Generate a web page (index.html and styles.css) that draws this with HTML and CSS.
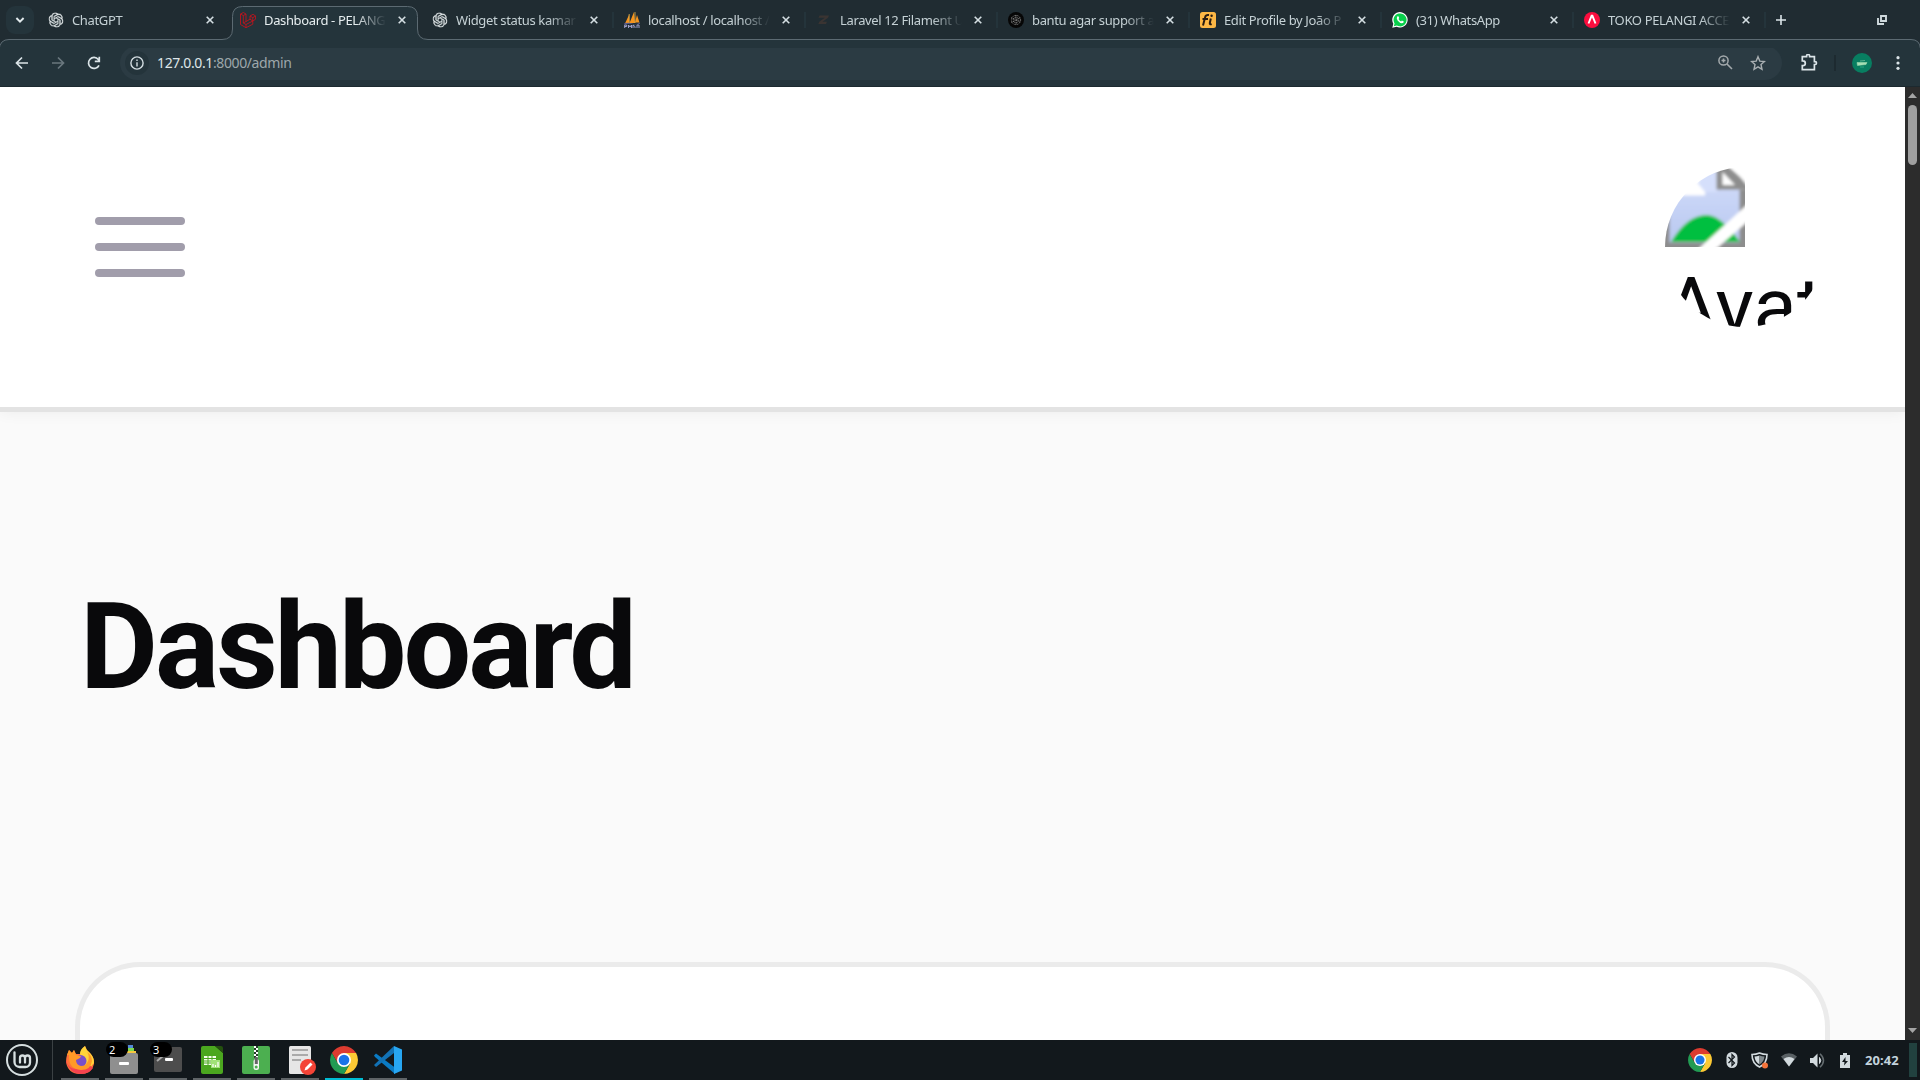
FILE: index.html
```html
<!DOCTYPE html>
<html lang="id">
<head>
<meta charset="utf-8">
<title>Dashboard</title>
<link rel="stylesheet" href="styles.css">
</head>
<body>
<svg class="defs" width="0" height="0">
  <defs>
    <symbol id="close" viewBox="0 0 8 8"><path d="M.7.7l6.6 6.6M7.3.7L.7 7.3" fill="none" stroke="#d5dfe3" stroke-width="1.6"/></symbol>
    <symbol id="gpt" viewBox="0 0 24 24"><path fill="#dde3e5" stroke="#dde3e5" stroke-width=".5" d="M22.280 9.820a5.980 5.980 0 0 0-.520-4.910 6.050 6.050 0 0 0-6.510-2.900A6.070 6.070 0 0 0 4.980 4.180a5.980 5.980 0 0 0-4 2.900 6.050 6.050 0 0 0 .740 7.100 5.980 5.980 0 0 0 .510 4.910 6.050 6.050 0 0 0 6.520 2.900A5.980 5.980 0 0 0 13.260 24a6.060 6.060 0 0 0 5.770-4.210 5.990 5.990 0 0 0 4-2.900 6.060 6.060 0 0 0-.750-7.070zM13.260 22.430a4.480 4.480 0 0 1-2.880-1.040l.140-.080 4.780-2.760a.800.800 0 0 0 .390-.680v-6.740l2.020 1.170v5.620a4.500 4.500 0 0 1-4.450 4.510zM3.600 18.300a4.470 4.470 0 0 1-.540-3.010l.140.090 4.780 2.760a.770.770 0 0 0 .780 0l5.840-3.370v2.330L9.740 19.950A4.500 4.500 0 0 1 3.600 18.300zM2.340 7.900a4.490 4.490 0 0 1 2.370-1.970v5.680a.770.770 0 0 0 .390.680l5.810 3.350-2.020 1.170-4.830-2.790A4.500 4.500 0 0 1 2.340 7.900zm16.600 3.850l-5.840-3.390L15.120 7.200l4.830 2.790a4.490 4.490 0 0 1-.680 8.100v-5.680a.790.790 0 0 0-.330-.660zm2.010-3.020l-.140-.090-4.770-2.780a.780.780 0 0 0-.790 0L9.410 9.230V6.900l4.860-2.820a4.500 4.500 0 0 1 6.680 4.650zM8.310 12.860l-2.020-1.160V6.070a4.500 4.500 0 0 1 7.380-3.450l-.140.080-4.780 2.760a.800.800 0 0 0-.390.680zm1.090-2.360L12 9l2.610 1.500v3L12 15l-2.610-1.500z"/></symbol>
    <symbol id="chrome" viewBox="0 0 28 28">
      <path d="M14 7H26.1A14 14 0 0 1 14 28L20.1 17.5z" fill="#fcc934"/>
      <path d="M1.900 7L8 17.500 14 21V7H26.100A14 14 0 0 0 1.900 7z" fill="#dc3b30"/>
      <path d="M1.900 7L8 17.500l6 3.500 6-3.500L14 28A14 14 0 0 1 1.900 7z" fill="#229b53"/>
      <circle cx="14" cy="14" r="7" fill="#fff"/><circle cx="14" cy="14" r="5.3" fill="#1a73e8"/></symbol>
  </defs>
</svg>

<div class="strip">
  <svg class="outline" width="1920" height="48" viewBox="0 0 1920 48"><path d="M-1 60V49.5Q0 39.5 9 39.5H222Q232.5 39.5 232.5 29V16.500Q232.5 6.5 242.500 6.5H407.500Q417.500 6.5 417.500 16.500V29Q417.500 39.500 428 39.500H1911Q1920 39.500 1920.500 49V60z" fill="#24343b" stroke="#5c6a72"/></svg>
  <button class="search-tabs"><svg width="10" height="8" viewBox="0 0 10 8"><path d="M1.400 2L5 5.600 8.600 2" fill="none" stroke="#e3ebee" stroke-width="1.900"/></svg></button>
  <div class="tabs">
    <div class="tab"><svg class="fav" viewBox="-1 -1 26 26"><use href="#gpt" width="24" height="24"/></svg><span class="title">ChatGPT</span><svg class="x"><use href="#close"/></svg></div>
    <div class="tab active"><svg class="fav" viewBox="0 0 16 16" fill="none" stroke="#d0101a" stroke-width=".8"><path d="M.5 2L3.300.5 6 2v7.500l4-2.300V4L13 2.300 15.600 4v3.200L12.800 9v3.200L6 15.700.500 12.500zM.5 2l2.800 1.600L6 2M3.300 3.600V11L6 12.500l6.800-3.500M6 12.500v3.200M3.300 11L6 9.500M10 4l2.800 1.700L15.600 4M12.800 5.700V9L10 7.200"/></svg><span class="title">Dashboard - PELANGI</span><svg class="x"><use href="#close"/></svg></div>
    <div class="tab"><svg class="fav" viewBox="-1 -1 26 26"><use href="#gpt" width="24" height="24"/></svg><span class="title">Widget status kamar</span><svg class="x"><use href="#close"/></svg></div>
    <div class="tab sep"><svg class="fav" viewBox="0 0 16 16"><path d="M1 11.500L5.200 2.500V11zM5.500 11L10 0l1 11zM11 10.500L13 3l2.500 7.500z" fill="#f6941d"/><path d="M5.200 2v9M11 0v11" stroke="#e3b34c" stroke-width=".8"/><path d="M0 11.500q4-1.500 8 0t8-1v1.200q-4 1-8 .3t-8 .5z" fill="#5a5d95"/><path d="M.7 16v-3h2v1.500h-2M4.500 16v-3l1.500 2 1.500-2v3M9 16v-3l2 1.500V16M13 16v-3h2v3" fill="none" stroke="#aaa9d6" stroke-width=".9"/></svg><span class="title">localhost / localhost /</span><svg class="x"><use href="#close"/></svg></div>
    <div class="tab sep"><svg class="fav" viewBox="0 0 16 16"><path d="M3.500 3.500h9.500l-1 2.300-5.500 4H11l-1 2.200H2.300l1-2.300 5.400-4H2.500z" fill="#3a3432"/></svg><span class="title">Laravel 12 Filament U</span><svg class="x"><use href="#close"/></svg></div>
    <div class="tab sep"><svg class="fav" viewBox="0 0 16 16"><circle cx="8" cy="8" r="8" fill="#060606"/><g fill="none" stroke="#a5a5a5" stroke-width=".8" stroke-dasharray=".9 .8"><circle cx="8" cy="8" r="4.600"/><circle cx="8" cy="8" r="2.800"/><path d="M8 3v10M3.500 5.500l9 5M3.500 10.500l9-5"/></g></svg><span class="title">bantu agar support a</span><svg class="x"><use href="#close"/></svg></div>
    <div class="tab sep"><svg class="fav" viewBox="0 0 16 16"><rect width="16" height="16" rx="2.500" fill="#fdb745"/><path d="M3 13.500L5.200 5Q5.800 2.500 9 3M2.500 7H8M10.800 6.500L9.800 11q-.3 2 1.800 1" fill="none" stroke="#2a1c12" stroke-width="2"/><circle cx="11.600" cy="3.800" r="1.200" fill="#2a1c12"/></svg><span class="title">Edit Profile by João P</span><svg class="x"><use href="#close"/></svg></div>
    <div class="tab sep"><svg class="fav" viewBox="0 0 16 16"><path d="M.3 15.700l1-4A7.700 7.700 0 1 1 4.500 14.700z" fill="#fff"/><path d="M1.800 14.300l.8-2.900a6.500 6.500 0 1 1 2.200 2.100z" fill="#08cf4b"/><path d="M5.400 4.300l1-.1.800 1.900-.7.900q.9 1.700 2.600 2.400l.8-.9 1.900.9q0 1.700-1.800 1.900Q7.800 11.200 5.600 8.500 4 6 5.400 4.300z" fill="#fff"/></svg><span class="title">(31) WhatsApp</span><svg class="x"><use href="#close"/></svg></div>
    <div class="tab sep"><svg class="fav" viewBox="0 0 16 16"><circle cx="8" cy="8" r="8" fill="#fb0d3e"/><path d="M4.500 11.500L7.600 3.800h.8l3.100 7.700" fill="none" stroke="#fff" stroke-width="1.900"/></svg><span class="title">TOKO PELANGI ACCE</span><svg class="x"><use href="#close"/></svg></div>
    <div class="newtab sep"><svg width="10" height="10" viewBox="0 0 10 10"><path d="M5 0v10M0 5h10" stroke="#dbe5e9" stroke-width="1.600"/></svg></div>
  </div>
  <svg class="restore" width="10" height="10" viewBox="0 0 10 10"><path d="M4 1h5v5H4zM1 3v6h6" fill="none" stroke="#cfd9dd" stroke-width="1.900"/></svg>
</div>

<div class="toolbar">
  <svg class="nav-i" viewBox="0 0 14 14"><path d="M13 7H2M7 1.500L1.500 7 7 12.500" fill="none" stroke="#dbe4e8" stroke-width="1.700"/></svg>
  <svg class="nav-i" viewBox="0 0 14 14"><path d="M1 7h11M7 1.500L12.500 7 7 12.500" fill="none" stroke="#6a777e" stroke-width="1.700"/></svg>
  <svg class="nav-i" viewBox="0 0 14 14"><path d="M12 9.300A5.500 5.500 0 1 1 11.300 3.500L12.300 4.700M12.300.8v4.600H7.800" fill="none" stroke="#dbe4e8" stroke-width="1.700"/></svg>
  <div class="omni">
    <span class="info"><svg width="14" height="14" viewBox="0 0 14 14"><circle cx="7" cy="7" r="6.100" fill="none" stroke="#d3dde1" stroke-width="1.400"/><path d="M7 6.200v4.300M7 3.400v1.500" stroke="#d3dde1" stroke-width="1.400"/></svg></span>
    <span class="url">127.0.0.1<i>:8000/admin</i></span>
    <svg class="zoom" width="15" height="15" viewBox="0 0 15 15"><circle cx="5.500" cy="5.500" r="4.600" fill="none" stroke="#a3a9ac" stroke-width="1.500"/><path d="M9 9l5 5M5.500 3.500v4M3.500 5.500h4" stroke="#a3a9ac" stroke-width="1.600"/></svg>
    <svg width="16" height="16" viewBox="0 0 16 16"><path d="M8 1.700l1.800 4.400 4.700.4L11 9.600l1 4.700-4-2.500-4 2.500 1-4.700L1.500 6.500l4.700-.4z" fill="none" stroke="#a9afb2" stroke-width="1.400"/></svg>
  </div>
  <svg class="ext" width="17" height="17" viewBox="0 0 17 17"><path d="M1.300 2.700h4.300V2a1.500 1.500 0 0 1 3 0v.7h4.800v5h.7a1.400 1.400 0 0 1 0 2.800h-.7v5.200H1.300v-4.100h.6a2.400 2.400 0 0 0 0-4.800h-.6z" fill="none" stroke="#dbe4e8" stroke-width="1.700"/></svg>
  <span class="bar"></span>
  <svg class="profile" width="20" height="20" viewBox="0 0 20 20"><circle cx="10" cy="10" r="10" fill="#087e61"/><path d="M5 9.500h10l-1 2-8.500 1zM8 8l5-.500" fill="#a5dfb4" stroke="#a5dfb4" stroke-width=".5"/><path d="M8 14h4" stroke="#2aa584"/></svg>
  <svg class="dots" width="4" height="14" viewBox="0 0 4 14" fill="#dbe4e8"><circle cx="2" cy="1.700" r="1.600"/><circle cx="2" cy="7" r="1.600"/><circle cx="2" cy="12.300" r="1.600"/></svg>
</div>

<div class="view">
  <main class="page">
    <nav class="topbar">
      <div class="burger"><span></span><span></span><span></span></div>
      <div class="avatar">
        <svg width="80" height="80" viewBox="0 0 16 16"><defs><linearGradient id="sky" x2="0" y2="1"><stop offset="0" stop-color="#d5dffb"/><stop offset="1" stop-color="#b9c8f0"/></linearGradient><filter id="soft" x="-20%" y="-20%" width="140%" height="140%"><feGaussianBlur stdDeviation=".35"/></filter></defs>
          <g filter="url(#soft)"><path d="M-1-1h12v5.500h7V18H-1z" fill="#8d8d8d"/><path d="M.9-1h9.600v5.500h4.400v10.600H.9z" fill="url(#sky)"/><path d="M-1-1h8v3.200Q8.500 3.500 8 5.700H3.300L-1 6z" fill="#fff"/><path d="M6.500 3.200Q8 .8 9 0h1.500v5H8z" fill="#d5dffb"/><path d="M1.200 15Q4.500 9.500 8.500 9.600q2.800.2 6.500 5.400z" fill="#05bf40"/><path d="M10.300-1v5.500H18L11.500-1z" fill="#8d8d8d"/><path d="M11.500 1v2.600H14z" fill="#fff"/><path d="M12.500-1h5v5h-.8z" fill="#fff"/><path d="M6 17L17 7v3.500L9.500 17z" fill="#fff"/></g></svg>
        <span>Avatar</span>
      </div>
    </nav>
    <h1>Dashboard</h1>
    <section class="card"></section>
  </main>
  <div class="scroll"><svg width="9" height="5" viewBox="0 0 9 5"><path d="M0 5L4.500 0 9 5z" fill="#a5a5a5"/></svg><span class="thumb"></span><svg width="9" height="5" viewBox="0 0 9 5"><path d="M0 0L4.500 5 9 0z" fill="#a5a5a5"/></svg></div>
</div>

<footer class="panel">
  <div class="menu"><svg width="32" height="32" viewBox="0 0 32 32" fill="none" stroke="#d6dfe0"><circle cx="16" cy="16" r="15" stroke-width="2"/><path d="M8.500 8.500v9.500a5 5 0 0 0 5 5h6a4.500 4.500 0 0 0 4.500-4.500V14a2.500 2.500 0 0 0-5 0v4.500M19 14a2.500 2.500 0 0 0-5 0v4.500" stroke-width="2.300" stroke-linecap="round"/></svg></div>
  <div class="apps">
    <div class="app"><svg width="28" height="28" viewBox="0 0 28 28"><path d="M1 9L3 4l3 3 2-3 2 4h5Q15 3 19 0q1 4 5 7 5 5 4 11-2 10-14 10T0 16q0-4 1-7z" fill="#ff7139"/><path d="M14 8Q14 3 19 0q1 4 5 7 4 4 4 10l-7 8z" fill="#ffd43a"/><circle cx="14.500" cy="15" r="6" fill="#7a4fc9"/><path d="M0 14q2 9 11 9 8 0 11-5l5 4q-4 6-13 6T0 16z" fill="#f5434f"/><path d="M1 9l2-5 3 3 2-3 2 5 5 1-1 2-4 2q0 5 5 6 5 0 7-5 2-5-1-9 5 3 5 9-1 9-11 9-13-1-12-15z" fill="#ff9a27"/></svg></div>
    <div class="app"><svg width="28" height="30" viewBox="0 0 28 30"><path d="M18 0h5v4h-5z" fill="#5289d7"/><path d="M18 3h6v5h-6z" fill="#7bd94e"/><path d="M17 6h9v5h-9z" fill="#f7c83f"/><rect y="8" width="28" height="21" rx="2" fill="#8f8f8f"/><rect x="9" y="17" width="10" height="3" rx="1" fill="#fff"/></svg><b>2</b></div>
    <div class="app"><svg width="28" height="26" viewBox="0 0 28 26"><rect width="28" height="25" rx="2" fill="#4d4d4d"/><path d="M3 14l6-5" stroke="#aaa" stroke-width="2"/><rect x="11" y="11" width="8" height="3" rx="1" fill="#fff"/></svg><b>3</b></div>
    <div class="app"><svg width="22" height="28" viewBox="0 0 22 28"><path d="M2 0h12l8 7v19a2 2 0 0 1-2 2H2a2 2 0 0 1-2-2V2a2 2 0 0 1 2-2z" fill="#4ba71f"/><path d="M14 0h6a2 2 0 0 1 2 2v5z" fill="#24510e"/><path d="M3 10h12v9H3z" fill="#f5ffed"/><path d="M3 12.500h12M3 15h12M3 17h12M7 10v9M11 10v9" stroke="#4ba71f"/><path d="M10 14h9v8h-9z" fill="#a0e278"/><path d="M12 21v-3M14.500 21v-2M17 21v-5" stroke="#fff" stroke-width="1.200"/></svg></div>
    <div class="app"><svg width="28" height="28" viewBox="0 0 28 28"><rect width="28" height="28" rx="2" fill="#4caf50"/><path d="M14 0v12" stroke="#263b29" stroke-width="4"/><path d="M13 0v12" stroke="#fff" stroke-width="2" stroke-dasharray="2 2"/><path d="M15 2v11" stroke="#fff" stroke-width="2" stroke-dasharray="2 2"/><rect x="11.500" y="13" width="5.500" height="11" rx="2.500" fill="#f5f5f5"/><rect x="12.800" y="11" width="3" height="7" fill="#666"/><circle cx="14.200" cy="21" r="1.500" fill="#4caf50"/></svg></div>
    <div class="app editor"><svg width="28" height="29" viewBox="0 0 28 29"><rect x="1" width="22" height="28" rx="1.500" fill="#e6e6e6"/><path d="M4 4h16M4 9h16M4 14h9" stroke="#aaa" stroke-width="2"/><circle cx="20" cy="21" r="8" fill="#f44336"/><path d="M16.500 24.500l1-3 5-5 2 2-5 5z" fill="#fff"/></svg></div>
    <div class="app current"><svg width="28" height="28"><use href="#chrome"/></svg></div>
    <div class="app"><svg width="28" height="28" viewBox="0 0 28 28"><path d="M0 9.500L2 7.500l19 14V28L1 11z" fill="#0a7bc4"/><path d="M0 19L20 0v7L2 21z" fill="#1272b5"/><path d="M20 0l8 3.500v21L20 28z" fill="#27a6f2"/></svg></div>
  </div>
  <div class="tray">
    <svg width="24" height="24"><use href="#chrome"/></svg>
    <svg class="bt" width="12" height="16" viewBox="0 0 12 16"><rect x=".5" width="11" height="16" rx="5.500" fill="#d2dade"/><path d="M2.500 5l6 6L6 13.500v-11L8.500 5l-6 6" fill="none" stroke="#12181c" stroke-width="1.200"/></svg>
    <svg class="shield" width="17" height="17" viewBox="0 0 17 17"><path d="M8.500 1Q5 2.500 1 2.500q0 9 7.500 12.500Q16 11.500 16 2.500 12 2.500 8.500 1z" fill="none" stroke="#d2dade" stroke-width="1.600"/><path d="M8.500 3.500v9Q4 10 3.500 4.500 6 4.500 8.500 3.500z" fill="#d2dade"/><path d="M8.500 3.500v9Q13 10 13.500 4.500 11 4.500 8.500 3.500z" fill="#80898d"/><circle cx="14" cy="13.500" r="3" fill="#f4743b"/></svg>
    <svg class="wifi" width="16" height="14" viewBox="0 0 16 14"><path d="M0 3.500Q8-3 16 3.500L8 13.500z" fill="#596064"/><path d="M2.500 6Q8 2 13.500 6L8 13.500z" fill="#d2dade"/></svg>
    <svg class="vol" width="15" height="15" viewBox="0 0 15 15"><path d="M0 5h3l4.500-4.500v14L3 10H0z" fill="#d2dade"/><path d="M9.500 4.500q2.500 3 0 6z" fill="#d2dade" stroke="#d2dade"/><path d="M10 .8q7 6.700 0 13.400" fill="none" stroke="#646c70" stroke-width="1.500"/></svg>
    <svg class="bat" width="10" height="15" viewBox="0 0 10 15"><path d="M0 2h3V0h4v2h3v13H0z" fill="#d2dade"/><path d="M5.500 4L2 9h2.500L4 12.500 8 8H5.500z" fill="#12181c"/></svg>
    <time>20:42</time>
    <span class="desk"></span>
  </div>
</footer>
</body>
</html>
```
FILE: styles.css
```css
* { box-sizing: border-box; }
body { margin: 0; width: 1920px; height: 1080px; overflow: hidden; display: flex; flex-direction: column; background: #202c32; font-family: "Noto Sans", sans-serif; }
svg { display: block; flex: none; }
.defs { position: absolute; }

.strip { height: 39px; flex: none; display: flex; align-items: center; position: relative; background: #202c32; padding: 0 33px 0 6px; }
.strip > * { position: relative; }
.strip .outline { position: absolute; left: 0; top: 0; }
.search-tabs { width: 28px; height: 28px; border: 0; padding: 0; border-radius: 9px; background: #24343b; display: flex; align-items: center; justify-content: center; margin-right: 6px; }
.tabs { display: flex; flex: 1; align-items: center; }
.tab, .newtab { width: 192px; height: 40px; display: flex; align-items: center; padding-left: 8px; position: relative; }
.newtab { width: 40px; }
.sep::before { content: ""; position: absolute; left: -4px; top: 12px; width: 2px; height: 16px; background: #24343b; }
.fav { width: 16px; height: 16px; margin-right: 8px; }
.title { width: 122px; overflow: hidden; white-space: nowrap; font-size: 13px; line-height: 20px; letter-spacing: -.36px; color: #c5d1d5; -webkit-mask-image: linear-gradient(90deg, #000 92px, transparent 122px); mask-image: linear-gradient(90deg, #000 92px, transparent 122px); }
.active .title { color: #e6edef; }
.x { width: 8px; height: 8px; margin-left: 12px; }

.toolbar { height: 48px; flex: none; background: #24343b; border-bottom: 1px solid #1c292f; display: flex; align-items: center; padding: 0 20px 0 15px; border-radius: 9px 9px 0 0; }
.nav-i { width: 14px; height: 14px; margin-right: 22px; }
.omni { width: 1662px; height: 34px; margin-left: -3px; border-radius: 17px; background: #2b3b43; display: flex; align-items: center; padding: 0 16px 0 5px; }
.info { width: 24px; height: 24px; border-radius: 50%; background: #24343b; display: flex; align-items: center; justify-content: center; margin-right: 8px; }
.url { flex: 1; font-size: 14px; line-height: 20px; letter-spacing: -.38px; color: #dfe6e9; }
.url i { font-style: normal; color: #9da7ab; }
.zoom { margin-right: 17px; }
.ext { margin-left: 19px; }
.bar { width: 2px; height: 16px; margin: 0 16px; background: #1d2a30; }
.dots { margin-left: auto; }

.view { height: 953px; flex: none; display: flex; }
.page { width: 1905px; overflow: hidden; background: #fafafa; }
.topbar { height: 320px; background: #fff; box-shadow: 0 0 0 5px #e3e3e3, 0 5px 15px rgba(0, 0, 0, .06); display: flex; align-items: center; justify-content: space-between; padding: 0 80px 0 95px; }
.burger { display: grid; gap: 18.500px; }
.burger span { width: 90px; height: 7.600px; border-radius: 4px; background: #a19dab; }
.avatar { width: 160px; height: 160px; clip-path: circle(80px); overflow: hidden; font-family: Roboto, sans-serif; color: #09090b; }
.avatar span { display: block; font-size: 80px; line-height: 120px; }
h1 { margin: 160px 0 0 80px; font: 700 120px/160px Roboto, sans-serif; letter-spacing: -3px; color: #09090b; height: 400px; }
.card { margin: 0 80px; height: 400px; background: #fff; border-radius: 60px; box-shadow: 0 0 0 5px #ebebeb; }

.scroll { width: 15px; background: #2c2c2c; display: flex; flex-direction: column; align-items: center; padding: 6px 0 7px; }
.thumb { width: 9px; height: 60px; margin: 7px 0 auto; border-radius: 5px; background: #9f9f9f; }

.panel { height: 40px; flex: none; background: #12181c; display: flex; justify-content: space-between; }
.menu { width: 53px; padding: 4px 0 0 6px; border-right: 1px solid #3b4144; }
.apps { display: flex; gap: 6px; margin-left: 8px; margin-right: auto; }
.app { width: 38px; border-bottom: 2px solid #5f6467; display: flex; align-items: center; justify-content: center; position: relative; padding-top: 2px; }
.editor { padding-left: 4px; }
.current { border-color: #00bcd4; }
.app b { position: absolute; left: 1px; top: 2px; width: 22px; height: 15px; border-radius: 8px; background: #000; color: #fff; font-size: 11px; font-weight: 400; line-height: 15px; padding-left: 3px; }
.tray { display: flex; align-items: center; padding-right: 3px; }
.bt { margin-left: 14px; }
.shield { margin-left: 13px; }
.wifi { margin-left: 13px; }
.vol { margin-left: 13px; }
.bat { margin-left: 15px; }
time { width: 36px; margin-left: 15px; font-size: 13px; font-weight: 700; letter-spacing: .1px; color: #c3d3dc; }
.desk { width: 8px; height: 34px; margin-left: 8px; background: #21413f; }
```
